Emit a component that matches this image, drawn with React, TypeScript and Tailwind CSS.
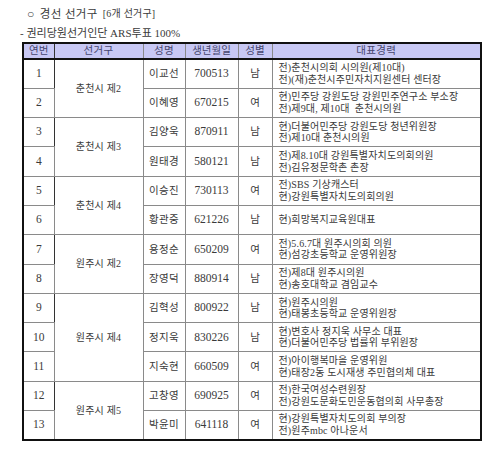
import React from "react";

type Row = {
  no: number;
  name: string;
  birth: string;
  sex: string;
  career: string[];
};

type District = { name: string; rows: Row[] };

const DISTRICTS: District[] = [
  {
    name: "춘천시 제2",
    rows: [
      { no: 1, name: "이교선", birth: "700513", sex: "남", career: ["전)춘천시의회 시의원(제10대)", "전)(재)춘천시주민자치지원센터 센터장"] },
      { no: 2, name: "이혜영", birth: "670215", sex: "여", career: ["현)민주당 강원도당 강원민주연구소 부소장", "전)제9대, 제10대  춘천시의원"] },
    ],
  },
  {
    name: "춘천시 제3",
    rows: [
      { no: 3, name: "김양욱", birth: "870911", sex: "남", career: ["현)더불어민주당 강원도당 청년위원장", "전)제10대 춘천시의원"] },
      { no: 4, name: "원태경", birth: "580121", sex: "남", career: ["전)제8.10대 강원특별자치도의회의원", "전)김유정문학촌 촌장"] },
    ],
  },
  {
    name: "춘천시 제4",
    rows: [
      { no: 5, name: "이승진", birth: "730113", sex: "여", career: ["전)SBS 기상캐스터", "현)강원특별자치도의회의원"] },
      { no: 6, name: "황관중", birth: "621226", sex: "남", career: ["현)희망복지교육원대표"] },
    ],
  },
  {
    name: "원주시 제2",
    rows: [
      { no: 7, name: "용정순", birth: "650209", sex: "여", career: ["전)5.6.7대 원주시의회 의원", "현)섬강초등학교 운영위원장"] },
      { no: 8, name: "장영덕", birth: "880914", sex: "남", career: ["전)제8대 원주시의원", "현)송호대학교 겸임교수"] },
    ],
  },
  {
    name: "원주시 제4",
    rows: [
      { no: 9, name: "김혁성", birth: "800922", sex: "남", career: ["현)원주시의원", "현)태봉초등학교 운영위원장"] },
      { no: 10, name: "정지욱", birth: "830226", sex: "남", career: ["현)변호사 정지욱 사무소 대표", "현)더불어민주당 법률위 부위원장"] },
      { no: 11, name: "지숙현", birth: "660509", sex: "여", career: ["전)아이행복마을 운영위원", "현)태장2동 도시재생 주민협의체 대표"] },
    ],
  },
  {
    name: "원주시 제5",
    rows: [
      { no: 12, name: "고창영", birth: "690925", sex: "여", career: ["전)한국여성수련원장", "전)강원도문화도민운동협의회 사무총장"] },
      { no: 13, name: "박윤미", birth: "641118", sex: "여", career: ["현)강원특별자치도의회 부의장", "전)원주mbc 아나운서"] },
    ],
  },
];

const FONT = "font-['Liberation_Serif','Noto_Sans_CJK_KR',serif]";
const CELL = "border border-[#8a8a8a] text-center align-middle p-0";

export default function App() {
  return (
    <div className={`w-[500px] h-[452px] bg-white text-[#3a3a3a] ${FONT}`}>
      <div className="pt-[6px]">
        <div className="pl-[27px] h-[16px] leading-[16px] text-[11.5px] tracking-[0.4px] flex items-center">
          <span className="text-[12px] mr-[5px]">○</span>
          <span>경선 선거구</span>
          <span className="ml-[5px] text-[10px] tracking-[0.2px]">[6개 선거구]</span>
        </div>
        <div className="pl-[20px] mt-[3px] h-[16px] leading-[16px] text-[11px]">
          - 권리당원선거인단 ARS투표 100%
        </div>
      </div>

      <table className="ml-[22px] mt-[1px] w-[460px] table-fixed border-collapse border-2 border-[#111] text-[10px] leading-[11.5px]">
        <colgroup>
          <col className="w-[31px]" />
          <col className="w-[89px]" />
          <col className="w-[42px]" />
          <col className="w-[53px]" />
          <col className="w-[34px]" />
          <col />
        </colgroup>
        <thead>
          <tr className="h-[16px] bg-[#c8c8f4] text-[#45456e] text-[10.5px] border-b-2 border-[#111]">
            <th className={`${CELL} font-normal border-r-[#333]`}>연번</th>
            <th className={`${CELL} font-normal tracking-[0.4px]`}>선거구</th>
            <th className={`${CELL} font-normal tracking-[0.4px]`}>성명</th>
            <th className={`${CELL} font-normal`}>생년월일</th>
            <th className={`${CELL} font-normal`}>성별</th>
            <th className={`${CELL} font-normal tracking-[0.4px]`}>대표경력</th>
          </tr>
        </thead>
        <tbody>
          {DISTRICTS.map((d) =>
            d.rows.map((r, i) => (
              <tr key={r.no} className="h-[29.3px]">
                <td className={`${CELL} text-[11.5px] border-r-[#333]`}>{r.no}</td>
                {i === 0 ? (
                  <td className={`${CELL} tracking-[0.2px]`} rowSpan={d.rows.length}>
                    {d.name}
                  </td>
                ) : null}
                <td className={`${CELL} text-[10.5px] tracking-[0.4px]`}>{r.name}</td>
                <td className={`${CELL} text-[11.5px]`}>{r.birth}</td>
                <td className={`${CELL} text-[10.5px]`}>{r.sex}</td>
                <td className={`${CELL} text-left pl-[6px] tracking-[0.15px] whitespace-pre`}>
                  {r.career.map((c) => (
                    <div key={c}>{c}</div>
                  ))}
                </td>
              </tr>
            )),
          )}
        </tbody>
      </table>
    </div>
  );
}
